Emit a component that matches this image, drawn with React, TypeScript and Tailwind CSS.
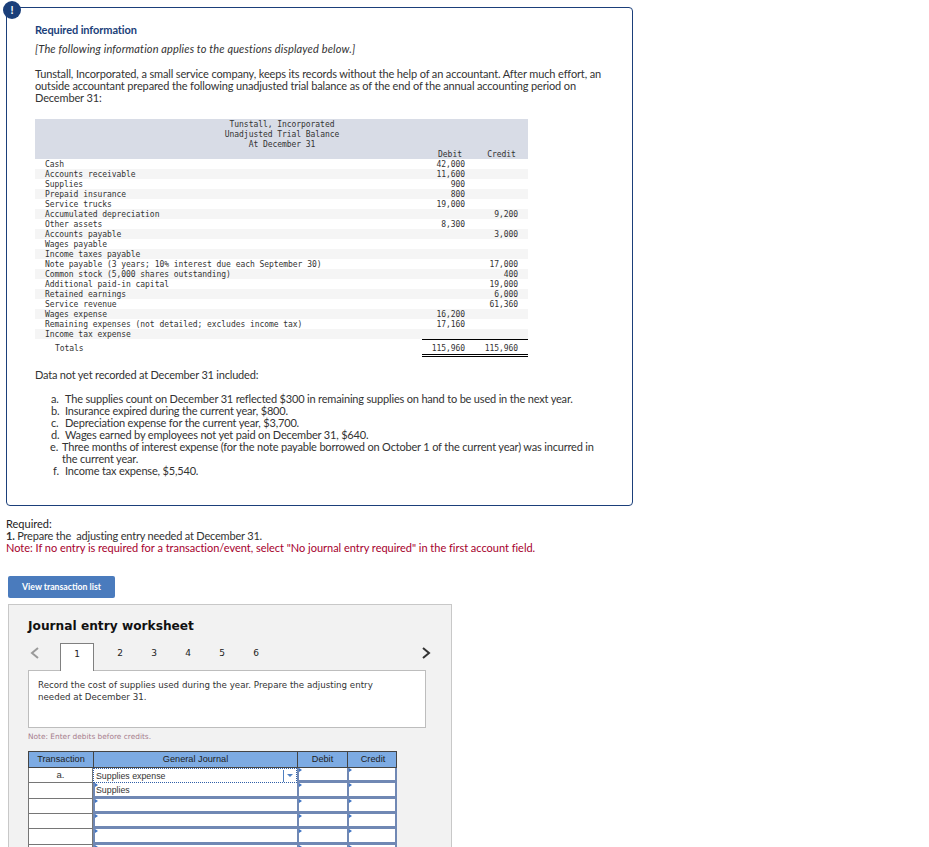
const bodyFont = "font-['Lato','Open_Sans',sans-serif]";

const rows: [string, string, string][] = [
  ['Cash', '42,000', ''],
  ['Accounts receivable', '11,600', ''],
  ['Supplies', '900', ''],
  ['Prepaid insurance', '800', ''],
  ['Service trucks', '19,000', ''],
  ['Accumulated depreciation', '', '9,200'],
  ['Other assets', '8,300', ''],
  ['Accounts payable', '', '3,000'],
  ['Wages payable', '', ''],
  ['Income taxes payable', '', ''],
  ['Note payable (3 years; 10% interest due each September 30)', '', '17,000'],
  ['Common stock (5,000 shares outstanding)', '', '400'],
  ['Additional paid-in capital', '', '19,000'],
  ['Retained earnings', '', '6,000'],
  ['Service revenue', '', '61,360'],
  ['Wages expense', '16,200', ''],
  ['Remaining expenses (not detailed; excludes income tax)', '17,160', ''],
  ['Income tax expense', '', ''],
];

const listItems = [
  { label: 'a.', cls: 'w-[14px]', text: 'The supplies count on December 31 reflected $300 in remaining supplies on hand to be used in the next year.' },
  { label: 'b.', cls: 'w-[14px]', text: 'Insurance expired during the current year, $800.' },
  { label: 'c.', cls: 'w-[14px]', text: 'Depreciation expense for the current year, $3,700.' },
  { label: 'd.', cls: 'w-[14px]', text: 'Wages earned by employees not yet paid on December 31, $640.' },
  { label: 'e.', cls: 'w-[12px] -ml-[1px]', text: 'Three months of interest expense (for the note payable borrowed on October 1 of the current year) was incurred in the current year.' },
  { label: 'f.', cls: 'w-[12px] ml-[2px]', text: 'Income tax expense, $5,540.' },
];

function TrialBalance() {
  return (
    <div className="w-[493px] mt-[15px] font-['DejaVu_Sans_Mono',monospace] text-[8px] tracking-[-0.05px] leading-[10px] text-[#333]">
      <div className="bg-[#d8dce6] h-[40px] pt-[1px]">
        <div className="text-center pl-[1px]">
          <div>Tunstall, Incorporated</div>
          <div>Unadjusted Trial Balance</div>
          <div>At December 31</div>
        </div>
        <div className="grid grid-cols-[387px_53px_53px]">
          <div />
          <div className="text-center pl-[4px] pr-[1px]">Debit</div>
          <div className="text-center">Credit</div>
        </div>
      </div>
      {rows.map((r, i) => (
        <div key={r[0]} className={`grid grid-cols-[387px_43px_53px] h-[10px] pt-[1px] ${i % 2 === 1 ? 'bg-[#f5f5f5]' : 'bg-white'}`}>
          <div className="pl-[10px]">{r[0]}</div>
          <div className="text-right">{r[1]}</div>
          <div className="text-right">{r[2]}</div>
        </div>
      ))}
      <div className="grid grid-cols-[387px_106px] h-[18px]">
        <div className="pl-[20px] pt-[5px]">Totals</div>
        <div className="grid grid-cols-[43px_53px] h-[18px] pt-[4px] border-t border-b-[3px] border-b-black border-t-black [border-bottom-style:double]">
          <div className="text-right">115,960</div>
          <div className="text-right">115,960</div>
        </div>
      </div>
    </div>
  );
}

function Marker() {
  return <span className="absolute left-0 top-0 w-0 h-0 border-t-[2px] border-b-[2px] border-l-[3px] border-t-transparent border-b-transparent border-l-[#3f74c4]" />;
}

function JournalRow({ tx, account, active, tall }: { tx?: string; account?: string; active?: boolean; tall?: boolean }) {
  const cell = 'h-full border-l-2 border-b-[3px] border-[#7088b4] bg-white relative';
  return (
    <div className={`grid grid-cols-[65px_204px_50px_50px] ${tall ? 'h-[16px]' : 'h-[15px]'}`}>
      <div className="border-l border-r border-b border-[#767676] bg-white text-center text-[9.5px] leading-[13px] font-['Liberation_Sans',sans-serif] text-[#333]">{tx}</div>
      {active ? (
        <div className="h-full border border-dotted border-[#2f5fa8] bg-white flex items-center justify-between text-[8.8px] font-['Liberation_Sans',sans-serif] text-[#333] pl-[2px]">
          <span className="pt-[1px]">{account}</span>
          <span className="border-l border-[#4f7fc0] h-[12px] w-[13px] flex items-center justify-center">
            <span className="w-0 h-0 border-l-[3px] border-r-[3px] border-t-[3px] border-l-transparent border-r-transparent border-t-[#4f7fc0]" />
          </span>
        </div>
      ) : (
        <div className={`${cell} text-[8.8px] leading-[12px] pt-[1px] pl-[1px] font-['Liberation_Sans',sans-serif] text-[#333]`}>
          <Marker />
          {account}
        </div>
      )}
      <div className={cell}><Marker /></div>
      <div className={`${cell} border-r-2`}><Marker /></div>
    </div>
  );
}

export default function App() {
  return (
    <div className={`h-[847px] w-[929px] overflow-hidden bg-white relative ${bodyFont} text-[11px] leading-[12px] text-[#333]`}>
      {/* alert badge */}
      <div className="absolute left-[3px] top-[1px] w-[18px] h-[18px] rounded-full bg-[#1b3f7a] text-white font-bold text-[11px] leading-[18px] text-center z-10">!</div>

      <div className="ml-[6px] mt-[7px] w-[627px] h-[499px] border border-[#1b3f7a] rounded-[4px] px-[28px] pt-[16px]">
        <div className="font-bold text-[#1b3f7a] leading-[12px] tracking-[-0.1px]">Required information</div>
        <div className="italic mt-[7px] tracking-[0.14px]">[The following information applies to the questions displayed below.]</div>
        <div className="mt-[13px] tracking-[-0.14px]">
          Tunstall, Incorporated, a small service company, keeps its records without the help of an accountant. After much effort, an outside accountant prepared the following unadjusted trial balance as of the end of the annual accounting period on December 31:
        </div>
        <TrialBalance />
        <div className="mt-[12px] tracking-[-0.2px]">Data not yet recorded at December 31 included:</div>
        <ul className="mt-[12px] pl-[16px] tracking-[-0.18px]">
          {listItems.map((t) => (
            <li key={t.label} className="flex">
              <span className={`shrink-0 ${t.cls}`}>{t.label}</span>
              <span>{t.text}</span>
            </li>
          ))}
        </ul>
      </div>

      <div className="ml-[6px] mt-[12px]">
        <div className="text-[#222]">Required:</div>
        <div className="tracking-[-0.2px]"><b>1.</b> Prepare the&nbsp; adjusting entry needed at December 31.</div>
        <div className="text-[#a6002d] tracking-[-0.02px]">Note: If no entry is required for a transaction/event, select "No journal entry required" in the first account field.</div>
      </div>

      <button className="block ml-[8px] mt-[22px] w-[107px] h-[22px] rounded-[2px] bg-[#4a7bbd] text-white text-[8.7px] font-bold">View transaction list</button>

      <div className="ml-[8px] mt-[6px] w-[444px] h-[300px] bg-[#f2f2f2] border border-[#c8c8c8] pl-[19px] pt-[13px]">
        <div className="font-['DejaVu_Sans',sans-serif] font-bold text-[12.2px] leading-[16px] text-[#111]">Journal entry worksheet</div>
        <div className="w-[397px] h-[27px] mt-[9px] flex items-start relative text-[9px] font-['DejaVu_Sans',sans-serif] text-[#222]">
          <svg className="absolute left-[2px] top-[3px]" width="10" height="14" viewBox="0 0 10 14" fill="none" stroke="#9a9a9a" strokeWidth="2"><path d="M8 2 2 7l6 5" /></svg>
          <div className="ml-[32px] w-[34px] h-[28px] bg-white border border-b-0 border-[#808080] text-center leading-[21px]">1</div>
          <div className="w-[9px]" />
          {[2, 3, 4, 5, 6].map((n) => (
            <div key={n} className="w-[34px] text-center leading-[21px]">{n}</div>
          ))}
          <svg className="absolute right-[-6px] top-[3px]" width="10" height="14" viewBox="0 0 10 14" fill="none" stroke="#333" strokeWidth="2"><path d="m2 2 6 5-6 5" /></svg>
        </div>
        <div className="w-[398px] h-[58px] bg-white border border-[#bdbdbd] pl-[9px] pr-[40px] pt-[8px] font-['DejaVu_Sans',sans-serif] text-[8.7px] leading-[12px] text-[#333]">
          Record the cost of supplies used during the year. Prepare the adjusting entry needed at December 31.
        </div>
        <div className="mt-[4px] font-['DejaVu_Sans',sans-serif] text-[7.4px] leading-[10px] text-[#a67c8c]">Note: Enter debits before credits.</div>
        <div className="mt-[9px] w-[369px]">
          <div className="grid grid-cols-[65px_204px_50px_50px] h-[17px] bg-[#7dabe3] border border-[#444] text-center text-[9.2px] leading-[14px] font-['Liberation_Sans',sans-serif] text-[#222]">
            <div className="border-r border-[#444]">Transaction</div>
            <div className="border-r border-[#444]">General Journal</div>
            <div className="border-r border-[#444]">Debit</div>
            <div>Credit</div>
          </div>
          <JournalRow tx="a." account="Supplies expense" active />
          <JournalRow account="Supplies" tall />
          <JournalRow />
          <JournalRow />
          <JournalRow tall />
          <JournalRow />
        </div>
      </div>
    </div>
  );
}
